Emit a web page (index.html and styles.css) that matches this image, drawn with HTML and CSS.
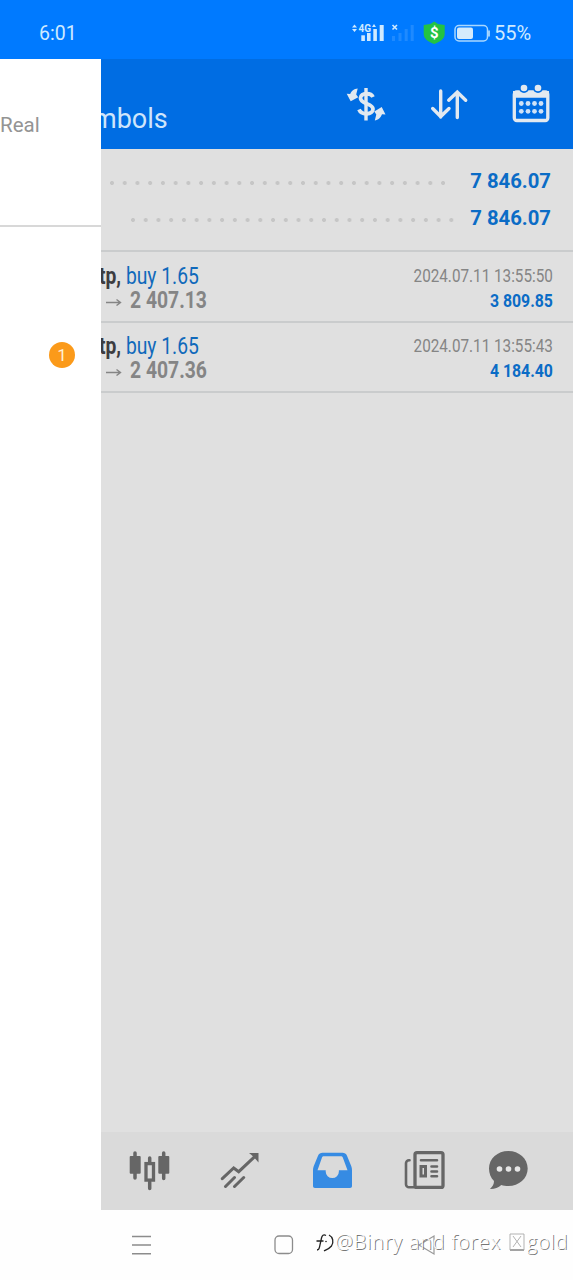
FILE: index.html
```
<!DOCTYPE html>
<html lang="en">
<head>
  <meta charset="UTF-8">
  <title>History</title>
  <link rel="stylesheet" href="styles.css">
</head>
<body>
  <div class="status-bar">
    <span class="time">6:01</span>
    <svg class="status-icons" width="142" height="30" viewBox="0 0 142 30">
      <g fill="#cfeaff">
        <path d="M2 9.500L4.500 6.500L7 9.500zM2 11L7 11L4.500 14z"/>
        <path d="M22 9l2-3 2 3z"/>
        <rect x="11.300" y="17.300" width="3.600" height="5.700"/>
        <rect x="17" y="15" width="3.600" height="8"/>
        <rect x="23.300" y="11" width="3.600" height="12"/>
        <rect x="29.700" y="7" width="4" height="16"/>
        <text x="8.500" y="13.500" class="network">4G</text>
      </g>
      <path d="M42.500 7l4.500 4.500M47 7l-4.500 4.500" stroke="#cfeaff" stroke-width="1.600"/>
      <g fill="#1f8aff">
        <rect x="42" y="18" width="3" height="5"/>
        <rect x="48.500" y="15" width="3" height="8"/>
        <rect x="54.700" y="11" width="3" height="12"/>
        <rect x="60.700" y="7" width="3" height="16"/>
      </g>
      <path d="M84.200 3.500l3.800 2.500 6.700 1v9c0 5-5 8-10.500 10-5.500-2-10.500-5-10.500-10v-9l6.700-1z" fill="#23c343"/>
      <text x="84.200" y="20" class="shield-text">$</text>
      <rect x="105" y="7.500" width="32.500" height="15.500" rx="4" fill="none" stroke="#a9d8ff" stroke-width="1.500"/>
      <rect x="107" y="9.500" width="16" height="11.500" rx="2" fill="#d5ebfc"/>
      <path d="M139 12.500v6" stroke="#a9d8ff" stroke-width="1.800"/>
    </svg>
    <span class="battery">55%</span>
  </div>

  <div class="app">
    <aside class="drawer">
      <div class="account">Real</div>
      <div class="menu"><span class="badge">1</span></div>
    </aside>

    <main class="main">
      <header class="header">
        <h1>mbols</h1>
        <svg class="icon-currency" width="44" height="44" viewBox="0 0 44 44">
          <g fill="none" stroke="#e2e9f0">
            <path d="M22 6v32.500" stroke-width="3.400"/>
            <path d="M29 15c-2-4.500-12.500-4.500-12.500 1 0 6.500 12.500 5 12.500 11 0 6-11.500 6.500-14 .5" stroke-width="3.800"/>
          </g>
          <path d="M13.700 6.500l-1.500 6 2 2.800-7.500 4-4-7.500 3.500.2c1-3 4-5.300 7.500-5.500z" fill="#e2e9f0"/>
          <path d="M30.800 38.500l1.500-6-2-3 7.400-4.500 3.800 7.500-3.500-.2c-1 3-4 6-7.200 6.200z" fill="#e2e9f0"/>
        </svg>
        <svg class="icon-sort" width="44" height="44" viewBox="0 0 44 44">
          <path d="M13.700 9v26M5.700 26.500l8 8 8.300-8M30.300 35.500V10M21.700 18.200l8.600-8.200 8.400 8.200" fill="none" stroke="#e2e9f0" stroke-width="3.400" stroke-linecap="round"/>
        </svg>
        <svg class="icon-calendar" width="44" height="44" viewBox="0 0 44 44">
          <rect x="5.300" y="10" width="33.500" height="28.500" rx="2.500" fill="none" stroke="#e2e9f0" stroke-width="3.300"/>
          <path d="M4 9h36v6.700H4z" fill="#e2e9f0"/>
          <circle cx="15" cy="6" r="5" fill="#006de3"/>
          <circle cx="29" cy="6" r="5" fill="#006de3"/>
          <g fill="#e2e9f0">
            <circle cx="15" cy="6" r="3.300"/><circle cx="29" cy="6" r="3.300"/>
          </g>
          <g fill="#cfe2f7">
            <circle cx="12.300" cy="21.500" r="2.400"/><circle cx="19" cy="21.500" r="2.400"/><circle cx="25.500" cy="21.500" r="2.400"/><circle cx="32" cy="21.500" r="2.400"/>
            <circle cx="12.300" cy="29.300" r="2.400"/><circle cx="19" cy="29.300" r="2.400"/><circle cx="25.500" cy="29.300" r="2.400"/><circle cx="32" cy="29.300" r="2.400"/>
          </g>
        </svg>
      </header>

      <section class="summary">
        <div class="summary-row profit"><span class="dots"></span><b>7 846.07</b></div>
        <div class="summary-row balance"><span class="dots"></span><b>7 846.07</b></div>
      </section>

      <section class="deal">
        <div class="deal-left">
          <div class="deal-name"><b>tp,</b> buy 1.65</div>
          <div class="deal-price"><svg width="16" height="10" viewBox="0 0 16 10"><path d="M0 6.500h14M10.500 3.500l4 3-4 3" fill="none" stroke="#858585" stroke-width="1.400"/></svg><span>2 407.13</span></div>
        </div>
        <div class="deal-right">
          <div class="deal-time">2024.07.11 13:55:50</div>
          <div class="deal-profit">3 809.85</div>
        </div>
      </section>
      <section class="deal">
        <div class="deal-left">
          <div class="deal-name"><b>tp,</b> buy 1.65</div>
          <div class="deal-price"><svg width="16" height="10" viewBox="0 0 16 10"><path d="M0 6.500h14M10.500 3.500l4 3-4 3" fill="none" stroke="#858585" stroke-width="1.400"/></svg><span>2 407.36</span></div>
        </div>
        <div class="deal-right">
          <div class="deal-time">2024.07.11 13:55:43</div>
          <div class="deal-profit">4 184.40</div>
        </div>
      </section>

      <nav class="tabs">
        <svg class="tab-quotes" width="44" height="44" viewBox="0 0 44 44">
          <g stroke="#666" stroke-width="3.500" stroke-linecap="round">
            <path d="M8 5v25M22.700 10v5M22.700 34v6.500M36.700 5v25.500"/>
          </g>
          <rect x="2.700" y="8" width="11" height="17.800" rx="1" fill="#666"/>
          <rect x="31.300" y="8" width="11" height="17.800" rx="1" fill="#666"/>
          <rect x="19" y="15.600" width="7.500" height="16.500" fill="none" stroke="#666" stroke-width="3.300"/>
        </svg>
        <svg class="tab-trade" width="44" height="44" viewBox="0 0 44 44">
          <path d="M4.300 30.700L15.700 20l5 3.700L37 8.300M7.500 38.500l9-9M16.500 38.500l9.200-9" fill="none" stroke="#666" stroke-width="3" stroke-linecap="round"/>
          <path d="M31 5h9.500v9.500l-3-3.500-4-4z" fill="#666"/>
        </svg>
        <svg class="tab-history" width="44" height="44" viewBox="0 0 44 44">
          <path fill-rule="evenodd" fill="#368be3" d="M12.500 4.700h20c2 0 3.500.8 4.500 3l4.300 10.500c.5 1.500.7 2.500.7 4V38c0 1.300-.7 2-2 2H5c-1.300 0-2-.7-2-2V22.200c0-1.500.2-2.500.7-4L8 7.700c1-2.200 2.500-3 4.500-3zM14 8.300c-1 0-1.700.4-2 1.200L7.500 22.200h8.200v1.300a6.600 6.600 0 0 0 13.200 0v-1.300h8.600L32.800 9.500c-.3-.8-1-1.200-2-1.200z"/>
        </svg>
        <svg class="tab-news" width="44" height="44" viewBox="0 0 44 44">
          <g fill="none" stroke="#666" stroke-linecap="round">
            <rect x="12" y="4.600" width="28" height="34.800" rx="2" stroke-width="3.300"/>
            <path d="M6.500 12.300H6a3 3 0 0 0-3 3v21a3 3 0 0 0 3 3h6" stroke-width="2.600"/>
            <path d="M18 12.300h16M28.500 18.500h5.500M28.500 23.500h5.500M28.500 28.300h5.500" stroke-width="2.600"/>
            <rect x="18" y="18.500" width="4.500" height="9.500" stroke-width="3"/>
          </g>
        </svg>
        <svg class="tab-messages" width="44" height="44" viewBox="0 0 44 44">
          <path fill="#666" d="M22.300 3C33 3 41.700 10.500 41.700 20.500S33 38 22.300 38c-2.500 0-5-.4-7-1-3 2.700-7 4.200-11.300 4 2.700-2.500 4-5 4-8-3.200-3.200-5-7.500-5-12.500C3 10.500 11.600 3 22.300 3z"/>
          <g fill="#e6e6e6"><circle cx="13.500" cy="21" r="2.800"/><circle cx="22.500" cy="21" r="2.800"/><circle cx="31.500" cy="21" r="2.800"/></g>
        </svg>
      </nav>
    </main>
  </div>

  <footer class="system-nav">
    <svg class="sys-menu" width="22" height="22" viewBox="0 0 22 22"><path d="M1 2.500h19M1 11h19M1 19.700h19" stroke="#8c8c8c" stroke-width="1.400"/></svg>
    <svg class="sys-home" width="22" height="22" viewBox="0 0 22 22"><rect x="2" y="2" width="17.500" height="17.500" rx="4" fill="none" stroke="#8c8c8c" stroke-width="1.300"/></svg>
    <svg class="sys-back" width="22" height="22" viewBox="0 0 22 22"><path d="M18 2v18L3 11z" fill="none" stroke="#999" stroke-width="1.200"/></svg>
    <div class="watermark">
      <svg width="20" height="24" viewBox="0 0 20 24"><path d="M11 5.500c-2.500-1.500-4 0-4.500 2.500L4.500 17c-.3 2-1 3-2.500 3M1.500 11h7M14 5c4 2 5 7 2.500 11-2 2.500-4.500 3.500-7.500 5" fill="none" stroke="#222" stroke-width="1.300"/><circle cx="11" cy="11.500" r=".8" fill="#222"/></svg>
      <span>@Binry and forex </span>
      <svg class="glyph" width="16" height="18" viewBox="0 0 16 18"><path d="M1 17h14" fill="none" stroke="#666" stroke-width="1.200"/><path d="M1 17V1h14v16M4 3l8 11M12 3L4 14" fill="none" stroke="#aaa" stroke-width=".9"/></svg>
      <span>gold</span>
    </div>
  </footer>
</body>
</html>
```
FILE: styles.css
```
* {
  box-sizing: border-box;
}
body {
  margin: 0;
  width: 573px;
  height: 1280px;
  overflow: hidden;
  display: flex;
  flex-direction: column;
  font-family: Roboto, "Liberation Sans", sans-serif;
  background-color: #fefefe;
}
svg {
  display: block;
  flex-shrink: 0;
}
.status-bar {
  height: 59px;
  display: flex;
  align-items: center;
  padding: 8px 39px 0 39px;
  background-color: #007aff;
  color: #cfeaff;
  font-size: 20px;
}
.time {
  font-size: 19.500px;
}
.status-icons {
  margin: -1px 0 0 auto;
}
.network {
  font-size: 10px;
  font-weight: 700;
}
.shield-text {
  font-size: 15px;
  font-weight: 700;
  fill: #fff;
  text-anchor: middle;
}
.battery {
  width: 40px;
  margin: -1px 0 0 2px;
}
.app {
  height: 1151px;
  display: flex;
}
.drawer {
  width: 101px;
  background-color: #fff;
}
.account {
  height: 168px;
  padding-top: 53px;
  border-bottom: 2px solid #d8d8d8;
  font-size: 20.500px;
  line-height: 26px;
  color: #949494;
}
.menu {
  padding: 115px 26px 0 0;
}
.badge {
  display: block;
  width: 26px;
  height: 26px;
  margin-left: auto;
  border-radius: 50%;
  background-color: #fb9a1a;
  color: #fff0d4;
  font-size: 17px;
  line-height: 26px;
  text-align: center;
}
.main {
  width: 472px;
  overflow: hidden;
  display: flex;
  flex-direction: column;
  background-color: #e0e0e0;
}
.header {
  height: 90px;
  flex-shrink: 0;
  display: flex;
  align-items: center;
  padding-right: 20px;
  background-color: #006de3;
}
.header h1 {
  width: 80px;
  margin: 30px auto 0 -8px;
  font-size: 27px;
  font-weight: 400;
  line-height: 32px;
  color: #cfe5fb;
}
.icon-currency {
  margin-right: 39px;
}
.icon-sort {
  margin-right: 38px;
}
.summary {
  height: 103px;
  padding: 13px 22px 0 0;
  border-bottom: 2px solid #cacccd;
}
.summary-row {
  height: 37px;
  display: flex;
  align-items: center;
  justify-content: space-between;
  font-size: 20.300px;
  color: #0b6cc6;
}
.dots {
  height: 4px;
  background: radial-gradient(circle at 2px 2px, #c6c6c6 1.700px, transparent 2.300px) 0 0 / 12.740px 4px;
}
.profit .dots {
  width: 336px;
  margin: 5px 0 0 9px;
}
.balance .dots {
  width: 323px;
  margin: 5px 0 0 30px;
}
.deal {
  height: 70px;
  display: flex;
  justify-content: space-between;
  padding: 10px 20px 0 0;
  border-bottom: 2px solid #cacccd;
}
.summary + .deal {
  height: 71px;
  padding-top: 11px;
}
/* narrow digits, the list uses a condensed face */
.deal-name,
.deal-price span {
  transform-origin: 0 0;
  white-space: nowrap;
}
.deal-name {
  margin-left: -2px;
  transform: scaleX(.82);
  font-size: 23.500px;
  line-height: 26px;
  color: #1069bb;
}
.deal-name b {
  color: #3c3c40;
}
.deal-price {
  display: flex;
  align-items: center;
  gap: 8px;
  padding-left: 5px;
  font-size: 23px;
  font-weight: 700;
  line-height: 24px;
  color: #858585;
}
.deal-price span {
  transform: scaleX(.84);
}
.deal-right {
  text-align: right;
  padding-top: 1px;
}
.deal-time,
.deal-profit {
  transform: scaleX(.825);
  transform-origin: 100% 0;
  font-size: 18.500px;
  line-height: 25px;
  color: #858585;
}
.deal-profit {
  transform: scaleX(.855);
  font-weight: 700;
  color: #0b6cc6;
}
.tabs {
  height: 78px;
  margin-top: auto;
  display: flex;
  padding: 16px 0 0 26px;
  background-color: #dadada;
}
.tab-trade {
  margin-left: 47px;
}
.tab-history {
  margin-left: 48px;
}
.tab-news {
  margin-left: 49px;
}
.tab-messages {
  margin-left: 39px;
}
.system-nav {
  position: relative;
  height: 70px;
  display: flex;
  align-items: center;
  padding-left: 131px;
}
.sys-home {
  margin-left: 120px;
}
.sys-back {
  margin-left: 121px;
}
.watermark {
  position: absolute;
  left: 315px;
  top: 18px;
  display: flex;
  align-items: center;
  font-family: "Open Sans", "Noto Sans", sans-serif;
  font-size: 20px;
  font-weight: 300;
  line-height: 27px;
  letter-spacing: .7px;
  white-space: pre;
  color: #fff;
  text-shadow: 1px 1px 0 #777;
}
.glyph {
  margin: 0 2px;
}
```
